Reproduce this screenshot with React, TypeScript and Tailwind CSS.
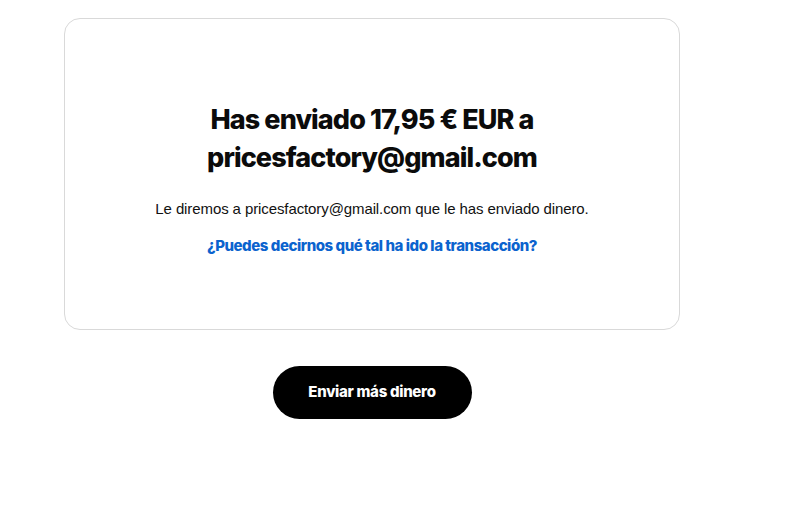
export default function App() {
  return (
    <div className="w-[800px] h-[520px] bg-white font-[family-name:'Liberation_Sans',Arial,sans-serif]">
      <div className="w-[616px] ml-[64px] pt-[18px] flex flex-col items-center">
        <div className="w-full h-[312px] border border-[#d9d9d9] rounded-[16px] flex flex-col items-center pt-[82px]">
          <h1 className="text-[27px] leading-[38px] font-extrabold text-center text-[#0b0b0b] tracking-[-0.9px] font-[family-name:Inter,sans-serif]">
            Has enviado 17,95 € EUR a<br />pricesfactory@gmail.com
          </h1>
          <p className="mt-[22px] text-[15px] leading-[20px] text-center text-[#111] tracking-[-0.1px]">
            Le diremos a pricesfactory@gmail.com que le has enviado dinero.
          </p>
          <a className="mt-[17px] text-[15px] leading-[20px] text-center font-extrabold text-[#0b63ce] tracking-[-0.45px] font-[family-name:Inter,sans-serif]">
            ¿Puedes decirnos qué tal ha ido la transacción?
          </a>
        </div>
        <button className="mt-[36px] w-[199px] h-[53px] rounded-full bg-black text-white text-[15px] font-extrabold tracking-[-0.3px] font-[family-name:Inter,sans-serif]">
          Enviar más dinero
        </button>
      </div>
    </div>
  );
}
